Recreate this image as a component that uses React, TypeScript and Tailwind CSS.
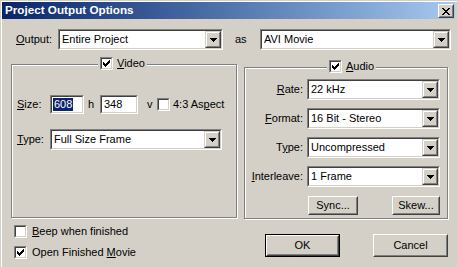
import React from "react";

type P = { className?: string; children?: React.ReactNode };

function Sunken({ className = "", children }: P) {
  return (
    <div className={`border border-t-[#808080] border-l-[#808080] border-b-white border-r-white ${className}`}>
      <div className="w-full h-full border border-t-[#404040] border-l-[#404040] border-b-[#D4D0C8] border-r-[#D4D0C8] bg-white flex items-center overflow-hidden">
        {children}
      </div>
    </div>
  );
}

function Raised({ className = "", children }: P) {
  return (
    <div className={`border border-t-white border-l-white border-b-[#404040] border-r-[#404040] ${className}`}>
      <div className="w-full h-full border border-t-[#D4D0C8] border-l-[#D4D0C8] border-b-[#808080] border-r-[#808080] bg-[#D4D0C8] flex items-center justify-center">
        {children}
      </div>
    </div>
  );
}

function Arrow() {
  return (
    <svg width="7" height="4" viewBox="0 0 7 4" shapeRendering="crispEdges">
      <rect x="0" y="0" width="7" height="1" fill="#000" />
      <rect x="1" y="1" width="5" height="1" fill="#000" />
      <rect x="2" y="2" width="3" height="1" fill="#000" />
      <rect x="3" y="3" width="1" height="1" fill="#000" />
    </svg>
  );
}

function DropBtn() {
  return (
    <div className="w-[16px] h-full shrink-0 border border-t-[#D4D0C8] border-l-[#D4D0C8] border-b-[#404040] border-r-[#404040]">
      <div className="w-full h-full border border-t-white border-l-white border-b-[#808080] border-r-[#808080] bg-[#D4D0C8] flex items-center justify-center">
        <Arrow />
      </div>
    </div>
  );
}

function Combo({ className = "", value }: { className?: string; value: string }) {
  return (
    <Sunken className={`h-[21px] shrink-0 ${className}`}>
      <span className="flex-1 pl-[2px] whitespace-nowrap leading-none">{value}</span>
      <DropBtn />
    </Sunken>
  );
}

function Check({ checked }: { checked?: boolean }) {
  return (
    <Sunken className="w-[13px] h-[13px] shrink-0">
      {checked && (
        <svg width="9" height="9" viewBox="0 0 9 9" shapeRendering="crispEdges" className="block">
          <rect x="1" y="3" width="1" height="3" fill="#000" />
          <rect x="2" y="4" width="1" height="3" fill="#000" />
          <rect x="3" y="5" width="1" height="3" fill="#000" />
          <rect x="4" y="4" width="1" height="3" fill="#000" />
          <rect x="5" y="3" width="1" height="3" fill="#000" />
          <rect x="6" y="2" width="1" height="3" fill="#000" />
          <rect x="7" y="1" width="1" height="3" fill="#000" />
        </svg>
      )}
    </Sunken>
  );
}

function CloseGlyph() {
  const px: [number, number][] = [];
  const rows = [
    "##....##",
    ".##..##.",
    "..####..",
    "...##...",
    "..####..",
    ".##..##.",
    "##....##",
  ];
  rows.forEach((r, y) => r.split("").forEach((c, x) => c === "#" && px.push([x, y])));
  return (
    <svg width="8" height="7" viewBox="0 0 8 7" shapeRendering="crispEdges">
      {px.map(([x, y]) => (
        <rect key={`${x}-${y}`} x={x} y={y} width="1" height="1" fill="#000" />
      ))}
    </svg>
  );
}

export default function App() {
  return (
    <div className="w-[457px] h-[267px] overflow-hidden bg-[#D4D0C8] shadow-[inset_1px_1px_0_#D4D0C8,inset_2px_2px_0_#fff] font-['Liberation_Sans',Arial,sans-serif] text-[11px] text-black flex flex-col select-none">
      {/* Title bar */}
      <div className="mt-[2px] ml-[2px] mr-[2px] h-[17px] bg-linear-to-r from-[#0A246A] to-[#A6CAF0] flex items-start justify-between">
        <span className="pl-[3px] pt-[1px] text-white font-bold text-[11.7px] leading-[14px]">Project Output Options</span>
        <Raised className="w-[16px] h-[14px] mt-[2px] mr-[1px]">
          <CloseGlyph />
        </Raised>
      </div>

      {/* Output row */}
      <div className="mt-[10px] flex items-center h-[21px]">
        <span className="ml-[16px] w-[42px]">
          <u>O</u>utput:
        </span>
        <Combo className="w-[165px]" value="Entire Project" />
        <span className="ml-[12px] w-[25px]">as</span>
        <Combo className="w-[191px]" value="AVI Movie" />
      </div>

      {/* Groups */}
      <div className="flex items-start">
        {/* Video */}
        <div className="relative ml-[11px] mt-[14px] w-[226px] h-[154px] border border-[#808080] shadow-[inset_1px_1px_0_#fff,1px_1px_0_#fff]">
          <div className="absolute left-[86px] top-[-8px] h-[13px] flex items-center bg-[#D4D0C8] px-[2px]">
            <Check checked />
            <span className="ml-[4px]">
              <u>V</u>ideo
            </span>
          </div>
          <div className="pt-[30px] flex items-center h-[49px]">
            <span className="pl-[5px] w-[38px]">
              <u>S</u>ize:
            </span>
            <Sunken className="w-[34px] h-[19px]">
              <span className="ml-[1px] bg-[#0A246A] text-white px-[1px] leading-[13px]">608</span>
            </Sunken>
            <span className="pl-[4px] w-[16px]">h</span>
            <Sunken className="w-[38px] h-[19px]">
              <span className="pl-[2px] leading-none">348</span>
            </Sunken>
            <span className="pl-[9px] w-[19px]">v</span>
            <Check />
            <span className="ml-[3px] whitespace-nowrap">
              4:3 As<u>p</u>ect
            </span>
          </div>
          <div className="mt-[15px] flex items-center h-[21px]">
            <span className="pl-[5px] w-[38px]">
              <u>T</u>ype:
            </span>
            <Combo className="w-[172px]" value="Full Size Frame" />
          </div>
        </div>

        {/* Audio */}
        <div className="relative ml-[7px] mt-[17px] w-[204px] h-[152px] border border-[#808080] shadow-[inset_1px_1px_0_#fff,1px_1px_0_#fff]">
          <div className="absolute left-[82px] top-[-8px] h-[13px] flex items-center bg-[#D4D0C8] px-[2px]">
            <Check checked />
            <span className="ml-[4px]">
              <u>A</u>udio
            </span>
          </div>
          <div className="pt-[11px] flex flex-col gap-[8px]">
            <div className="flex items-center h-[21px]">
              <span className="w-[62px] pr-[4px] text-right">
                <u>R</u>ate:
              </span>
              <Combo className="w-[133px]" value="22 kHz" />
            </div>
            <div className="flex items-center h-[21px]">
              <span className="w-[62px] pr-[4px] text-right">
                <u>F</u>ormat:
              </span>
              <Combo className="w-[133px]" value="16 Bit - Stereo" />
            </div>
            <div className="flex items-center h-[21px]">
              <span className="w-[62px] pr-[4px] text-right">
                T<u>y</u>pe:
              </span>
              <Combo className="w-[133px]" value="Uncompressed" />
            </div>
            <div className="flex items-center h-[21px]">
              <span className="w-[62px] pr-[4px] text-right">
                <u>I</u>nterleave:
              </span>
              <Combo className="w-[133px]" value="1 Frame" />
            </div>
          </div>
          <div className="mt-[9px] flex">
            <Raised className="ml-[63px] w-[50px] h-[19px]">Sync...</Raised>
            <Raised className="ml-[34px] w-[48px] h-[19px]">Skew...</Raised>
          </div>
        </div>
      </div>

      {/* Bottom */}
      <div className="flex items-start mt-[6px]">
        <div className="w-[265px] pl-[14px] flex flex-col gap-[8px]">
          <div className="flex items-center h-[13px]">
            <Check />
            <span className="ml-[5px]">
              <u>B</u>eep when finished
            </span>
          </div>
          <div className="flex items-center h-[13px]">
            <Check checked />
            <span className="ml-[5px]">
              Open Finished <u>M</u>ovie
            </span>
          </div>
        </div>
        <div className="mt-[9px] flex">
          <div className="w-[75px] h-[23px] border border-black">
            <Raised className="w-full h-full">OK</Raised>
          </div>
          <Raised className="ml-[33px] w-[75px] h-[23px]">Cancel</Raised>
        </div>
      </div>
    </div>
  );
}
